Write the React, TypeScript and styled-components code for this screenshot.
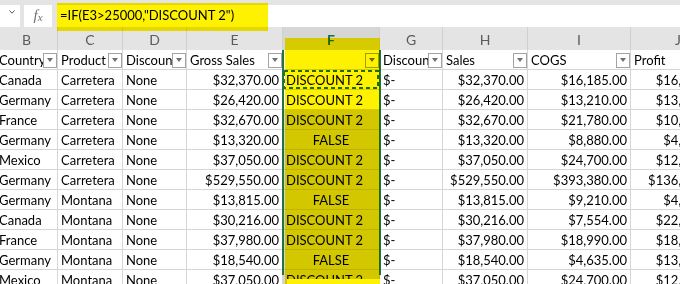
import styled, { createGlobalStyle } from 'styled-components';

type Align = 'left' | 'right' | 'center';

const GlobalStyle = createGlobalStyle`
  html, body {
    margin: 0;
    padding: 0;
    background: #fff;
  }
  body {
    font-family: Lato, 'Liberation Sans', sans-serif;
  }
`;

const Window = styled.div`
  position: relative;
  width: 680px;
  height: 284px;
  overflow: hidden;
  background: #e4e4e4;
`;

const FormulaBar = styled.div`
  display: flex;
  gap: 4px;
  height: 27px;
  padding-top: 5px;
  box-sizing: border-box;
`;

const NameBox = styled.div`
  width: 20px;
  background: #fff;
  display: flex;
  align-items: flex-start;
  justify-content: flex-end;
  padding: 5px 5px 0 0;
  box-sizing: border-box;
`;

const FxBox = styled.div`
  width: 28px;
  background: #fff;
  display: flex;
  justify-content: center;
  align-items: flex-start;
  padding-top: 2px;
  box-sizing: border-box;
  font-family: 'Liberation Serif', serif;
  font-style: italic;
  font-size: 15px;
  color: #6f6f6f;

  small {
    font-size: 11px;
    margin-top: 4px;
  }
`;

const FormulaField = styled.div`
  flex: 1;
  margin-left: 1px;
  background: #fff;
  padding: 2px 0 0 3px;
  font-size: 13px;
  color: #000;
  white-space: nowrap;
`;

const LetterRow = styled.div`
  display: grid;
  grid-template-columns: 62px 65px 64px 96px 97px 63px 85px 103px 95px;
  margin-left: -4px;
  height: 23px;
`;

const Letter = styled.div<{ $active?: boolean }>`
  box-sizing: border-box;
  padding-top: 3px;
  line-height: 20px;
  text-align: center;
  font-size: 14px;
  border-right: 1px solid #d0d0d0;
  color: ${(p) => (p.$active ? '#1e6b41' : '#5b5b5b')};
  font-weight: ${(p) => (p.$active ? 700 : 400)};
  background: ${(p) => (p.$active ? '#d6d6d6' : 'transparent')};
  border-bottom: ${(p) => (p.$active ? '2px solid #217346' : 'none')};
`;

const Sheet = styled.div`
  display: grid;
  grid-template-columns: 62px 65px 64px 96px 97px 63px 85px 103px 95px;
  grid-auto-rows: 20px;
  margin-left: -4px;
  background: #fff;
`;

const Cell = styled.div<{ $align?: Align; $shaded?: boolean }>`
  position: relative;
  box-sizing: border-box;
  display: flex;
  align-items: center;
  justify-content: ${(p) =>
    p.$align === 'right' ? 'flex-end' : p.$align === 'center' ? 'center' : 'flex-start'};
  padding: 1px 3px 0;
  overflow: hidden;
  white-space: nowrap;
  font-size: 13px;
  color: #000;
  background: ${(p) => (p.$shaded ? '#d3d3d3' : '#fff')};
  border-right: 1px solid ${(p) => (p.$shaded ? '#bdbdbd' : '#d6d6d6')};
  border-bottom: 1px solid ${(p) => (p.$shaded ? '#bdbdbd' : '#d6d6d6')};
`;

const HeadCell = styled(Cell)`
  padding-right: 0;
`;

const HeadText = styled.span`
  flex: 1;
  min-width: 0;
  overflow: hidden;
`;

const FilterButton = styled.div`
  flex-shrink: 0;
  width: 14px;
  height: 15px;
  box-sizing: border-box;
  border: 1px solid #a3a3a3;
  display: flex;
  align-items: center;
  justify-content: center;

  &::after {
    content: '';
    border-left: 3.5px solid transparent;
    border-right: 3.5px solid transparent;
    border-top: 4px solid #707070;
  }
`;

const Marquee = styled.svg`
  position: absolute;
  left: 0;
  top: 0;
  width: 96px;
  height: 19px;
`;

const Highlight = styled.div<{ $l: number; $t: number; $w: number; $h: number; $blend?: boolean }>`
  position: absolute;
  left: ${(p) => p.$l}px;
  top: ${(p) => p.$t}px;
  width: ${(p) => p.$w}px;
  height: ${(p) => p.$h}px;
  background: #fff200;
  mix-blend-mode: ${(p) => (p.$blend ? 'multiply' : 'normal')};
  pointer-events: none;
`;

const SelectionFrame = styled.div`
  position: absolute;
  left: 282px;
  top: 50px;
  width: 99px;
  height: 225px;
  box-sizing: border-box;
  border: 2px solid #217346;
  border-top: none;
  border-bottom: none;
  pointer-events: none;
`;

const letters = ['B', 'C', 'D', 'E', 'F', 'G', 'H', 'I', 'J'];
const heads = ['Country', 'Product', 'Discount Band', 'Gross Sales', '', 'Discounts', 'Sales', 'COGS', 'Profit'];
const aligns: Align[] = ['left', 'left', 'left', 'right', 'left', 'left', 'right', 'right', 'right'];

const rows = [
  ['Canada', 'Carretera', 'None', '$32,370.00', 'DISCOUNT 2', '$-', '$32,370.00', '$16,185.00', '$16,185.00'],
  ['Germany', 'Carretera', 'None', '$26,420.00', 'DISCOUNT 2', '$-', '$26,420.00', '$13,210.00', '$13,210.00'],
  ['France', 'Carretera', 'None', '$32,670.00', 'DISCOUNT 2', '$-', '$32,670.00', '$21,780.00', '$10,890.00'],
  ['Germany', 'Carretera', 'None', '$13,320.00', 'FALSE', '$-', '$13,320.00', '$8,880.00', '$4,440.00'],
  ['Mexico', 'Carretera', 'None', '$37,050.00', 'DISCOUNT 2', '$-', '$37,050.00', '$24,700.00', '$12,350.00'],
  ['Germany', 'Carretera', 'None', '$529,550.00', 'DISCOUNT 2', '$-', '$529,550.00', '$393,380.00', '$136,170.00'],
  ['Germany', 'Montana', 'None', '$13,815.00', 'FALSE', '$-', '$13,815.00', '$9,210.00', '$4,605.00'],
  ['Canada', 'Montana', 'None', '$30,216.00', 'DISCOUNT 2', '$-', '$30,216.00', '$7,554.00', '$22,662.00'],
  ['France', 'Montana', 'None', '$37,980.00', 'DISCOUNT 2', '$-', '$37,980.00', '$18,990.00', '$18,990.00'],
  ['Germany', 'Montana', 'None', '$18,540.00', 'FALSE', '$-', '$18,540.00', '$4,635.00', '$13,905.00'],
  ['Mexico', 'Montana', 'None', '$37,050.00', 'DISCOUNT 2', '$-', '$37,050.00', '$24,700.00', '$12,350.00']
];

export default function App() {
  return (
    <Window>
      <GlobalStyle />
      <FormulaBar>
        <NameBox>
          <svg width="6" height="4" viewBox="0 0 6 4">
            <path d="M0.5 0.5 L3 3.2 L5.5 0.5" fill="none" stroke="#555" strokeWidth="1" />
          </svg>
        </NameBox>
        <FxBox>
          f<small>x</small>
        </FxBox>
        <FormulaField>=IF(E3&gt;25000,"DISCOUNT 2")</FormulaField>
      </FormulaBar>

      <LetterRow>
        {letters.map((l) => (
          <Letter key={l} $active={l === 'F'}>
            {l}
          </Letter>
        ))}
      </LetterRow>

      <Sheet>
        {heads.map((h, i) => (
          <HeadCell key={'h' + i}>
            <HeadText>{h}</HeadText>
            {i < 8 && <FilterButton />}
          </HeadCell>
        ))}
        {rows.map((row, r) =>
          row.map((v, c) => {
            const isF = c === 4;
            const align: Align = isF && v === 'FALSE' ? 'center' : aligns[c];
            return (
              <Cell key={r + '-' + c} $align={align} $shaded={isF && r >= 2}>
                {v}
                {isF && r === 0 && (
                  <Marquee viewBox="0 0 96 19">
                    <rect
                      x="1"
                      y="1"
                      width="94"
                      height="17"
                      fill="none"
                      stroke="#217346"
                      strokeWidth="2"
                      strokeDasharray="4 3"
                    />
                  </Marquee>
                )}
              </Cell>
            );
          })
        )}
      </Sheet>

      <SelectionFrame />
      <Highlight $l={57} $t={3} $w={211} $h={28} $blend />
      <Highlight $l={285} $t={38} $w={95} $h={246} $blend />
      <Highlight $l={287} $t={279} $w={93} $h={5} />
    </Window>
  );
}
